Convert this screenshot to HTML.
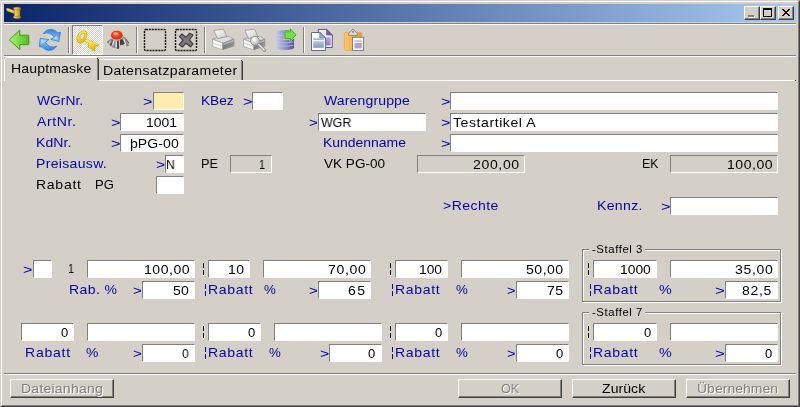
<!DOCTYPE html>
<html><head><meta charset="utf-8"><title>Maske</title>
<style>
html,body{margin:0;padding:0}
body{width:800px;height:407px;overflow:hidden;background:#d4d0c8;position:relative;font-family:"Liberation Sans",sans-serif;font-size:13px;color:#000}
.a,.t,.f,.l{position:absolute}
.t{white-space:pre;line-height:1;transform-origin:0 0;will-change:transform}
.f{box-sizing:border-box;border-top:1px solid #808080;border-left:1px solid #808080;border-right:1px solid #fff;border-bottom:1px solid #fff}
.btn{position:absolute;box-sizing:border-box;background:#d4d0c8;border-top:1px solid #fff;border-left:1px solid #fff;border-right:1px solid #404040;border-bottom:1px solid #404040}
.btn:after{content:"";position:absolute;left:0;top:0;right:0;bottom:0;border-right:1px solid #808080;border-bottom:1px solid #808080}
.dis{color:#808080;text-shadow:1px 1px 0 #fff}
.gb{position:absolute;box-sizing:border-box;border:1px solid #808080;box-shadow:1px 1px 0 #fff, inset 1px 1px 0 #fff}
.bar{position:absolute;width:1px}
</style></head><body>

<div class="a" style="left:0;top:0;width:800px;height:407px;box-sizing:border-box;border-top:1px solid #d4d0c8;border-left:1px solid #d4d0c8;border-right:1px solid #404040;border-bottom:1px solid #404040"></div>
<div class="a" style="left:1px;top:1px;width:798px;height:405px;box-sizing:border-box;border-top:1px solid #fff;border-left:1px solid #fff;border-right:1px solid #808080;border-bottom:1px solid #808080"></div>
<div class="a" style="left:4px;top:4px;width:792px;height:18px;background:linear-gradient(to right,#0a246a 0%,#a6caf0 100%)"></div>
<svg class="a" style="left:5px;top:5px" width="18" height="16" viewBox="0 0 18 16">
<defs><linearGradient id="gm" x1="0" y1="0" x2="1" y2="0"><stop offset="0" stop-color="#f7e27a"/><stop offset=".5" stop-color="#e0b838"/><stop offset="1" stop-color="#a87c10"/></linearGradient></defs>
<path d="M1.5 4.4 Q1.3 2.9 3 3.2 L9.4 5.7 L9.2 8.4 L2.3 5.9 Q1.5 5.3 1.5 4.4 Z" fill="#f4d858" stroke="#b48c18" stroke-width=".5"/>
<path d="M8.6 2.8 Q12.2 1.3 15.7 2.8 L15.7 4.2 L15 4.9 L15 10.7 L15.7 11.4 L15.7 12.9 Q12.2 14.4 8.6 12.9 L8.6 11.4 L9.3 10.7 L9.3 4.9 L8.6 4.2 Z" fill="url(#gm)" stroke="#8a6408" stroke-width=".5"/>
<path d="M9 4.4 Q12.2 5.4 15.3 4.4 M9 11.2 Q12.2 12.2 15.3 11.2" stroke="#9a7410" stroke-width=".5" fill="none"/>
</svg>
<div class="btn" style="left:744px;top:6px;width:16px;height:14px"></div>
<div class="btn" style="left:760px;top:6px;width:16px;height:14px"></div>
<div class="btn" style="left:778px;top:6px;width:16px;height:14px"></div>
<div class="a" style="left:749px;top:16px;width:6px;height:2px;background:#fff"></div>
<div class="a" style="left:748px;top:15px;width:6px;height:2px;background:#808080"></div>
<div class="a" style="left:763px;top:8px;width:9px;height:9px;box-sizing:border-box;border:1px solid #000;border-top-width:2px"></div>
<svg class="a" style="left:778px;top:6px" width="16" height="14" viewBox="0 0 16 14" shape-rendering="crispEdges"><path d="M4 3h2v1h1v1h2v-1h1v-1h2v1h-1v1h-1v1h-1v1h1v1h1v1h1v1h-2v-1h-1v-1h-2v1h-1v1h-2v-1h1v-1h1v-1h1v-1h-1v-1h-1v-1h-1z" fill="#000"/></svg>

<div class="l" style="left:4px;top:23px;width:792px;height:1px;background:#808080"></div><div class="l" style="left:4px;top:24px;width:792px;height:1px;background:#fff"></div>
<div class="l" style="left:4px;top:55px;width:792px;height:1px;background:#808080"></div><div class="l" style="left:4px;top:56px;width:792px;height:1px;background:#fff"></div>
<div class="a" style="left:72px;top:25px;width:31px;height:30px;box-sizing:border-box;border-top:1px solid #808080;border-left:1px solid #808080;border-right:1px solid #fff;border-bottom:1px solid #fff;background-color:#d4d0c8;background-image:linear-gradient(45deg,#fff 25%,transparent 25%,transparent 75%,#fff 75%),linear-gradient(45deg,#fff 25%,transparent 25%,transparent 75%,#fff 75%);background-size:2px 2px;background-position:0 0,1px 1px"></div>
<div class="l" style="left:68px;top:27px;width:1px;height:26px;background:#808080"></div><div class="l" style="left:69px;top:27px;width:1px;height:26px;background:#fff"></div>
<div class="l" style="left:136px;top:27px;width:1px;height:26px;background:#808080"></div><div class="l" style="left:137px;top:27px;width:1px;height:26px;background:#fff"></div>
<div class="l" style="left:204px;top:27px;width:1px;height:26px;background:#808080"></div><div class="l" style="left:205px;top:27px;width:1px;height:26px;background:#fff"></div>
<div class="l" style="left:303px;top:27px;width:1px;height:26px;background:#808080"></div><div class="l" style="left:304px;top:27px;width:1px;height:26px;background:#fff"></div>
<svg class="a" style="left:4px;top:25px" width="400" height="30" viewBox="4 25 400 30">
<defs>
<linearGradient id="gA" x1="0" y1="0" x2="1" y2="0"><stop offset="0" stop-color="#a4f870"/><stop offset="1" stop-color="#54bc1c"/></linearGradient>
<linearGradient id="gB" x1="0" y1="0" x2="0" y2="1"><stop offset="0" stop-color="#2f86e6"/><stop offset="1" stop-color="#8cc6ff"/></linearGradient>
<linearGradient id="gB2" x1="0" y1="1" x2="0" y2="0"><stop offset="0" stop-color="#2f86e6"/><stop offset="1" stop-color="#9ad0ff"/></linearGradient>
<radialGradient id="gR" cx=".45" cy=".4" r=".6"><stop offset="0" stop-color="#ff7a50"/><stop offset=".6" stop-color="#ee3a12"/><stop offset="1" stop-color="#d02808"/></radialGradient>
<linearGradient id="gK" x1="0" y1="0" x2="1" y2="1"><stop offset="0" stop-color="#fff27a"/><stop offset=".5" stop-color="#f8d41c"/><stop offset="1" stop-color="#d8a400"/></linearGradient>
<linearGradient id="gP" x1="0" y1="0" x2="1" y2="1"><stop offset="0" stop-color="#ffffff"/><stop offset="1" stop-color="#c8c8c8"/></linearGradient>
<linearGradient id="gPr" x1="0" y1="0" x2="0" y2="1"><stop offset="0" stop-color="#c8c8c8"/><stop offset="1" stop-color="#7c7c7c"/></linearGradient>
<linearGradient id="gC" x1="0" y1="0" x2="1" y2="0"><stop offset="0" stop-color="#c4c4e8"/><stop offset=".45" stop-color="#9494cc"/><stop offset="1" stop-color="#54549c"/></linearGradient>
<linearGradient id="gO" x1="0" y1="0" x2="1" y2="0"><stop offset="0" stop-color="#ffc868"/><stop offset="1" stop-color="#f09a20"/></linearGradient>
<linearGradient id="gBl" x1="0" y1="0" x2="0" y2="1"><stop offset="0" stop-color="#b8c8e4"/><stop offset="1" stop-color="#8098c8"/></linearGradient>
<linearGradient id="gPu" x1="0" y1="0" x2="0" y2="1"><stop offset="0" stop-color="#b8a0dc"/><stop offset="1" stop-color="#9878c4"/></linearGradient>
<radialGradient id="gG" cx=".4" cy=".35" r=".7"><stop offset="0" stop-color="#ffffff"/><stop offset="1" stop-color="#b4b4b4"/></radialGradient>
</defs>
<!-- back arrow -->
<path d="M9.3 39.9 L19.8 30 L19.8 35.2 L28.8 35.2 L28.8 44.6 L19.8 44.6 L19.8 49.7 Z" fill="url(#gA)" stroke="#3c9c14" stroke-width="1" stroke-linejoin="round"/>
<!-- refresh -->
<path d="M43.3 33.7 A8.6 8.6 0 0 1 57.5 32.7 L60.5 32.2 L58.8 41.5 L50.9 39.4 L54.3 37.3 A8.4 8.4 0 0 0 43.3 33.7 Z" fill="url(#gB)" stroke="#2472d0" stroke-width=".7" stroke-linejoin="round"/>
<path d="M56.7 46.1 A8.6 8.6 0 0 1 42.5 47.1 L39.3 46.5 L40.2 38.3 L48.8 39.6 L45.5 42.4 A8.4 8.4 0 0 0 56.7 46.1 Z" fill="url(#gB2)" stroke="#2472d0" stroke-width=".7" stroke-linejoin="round"/>
<path d="M56.6 35.4 L57.8 39.4 L53 38.6 Z" fill="#c4e4ff" opacity=".7"/>
<path d="M41.4 39.8 L41.2 44 L45.8 40.8 Z" fill="#d0eaff" opacity=".7"/>
<!-- key -->
<g>
<path d="M85.2 38.9 L98.6 44.4 L98.1 46.2 L95.3 45.9 L94.8 50.7 L92.1 50.4 L91.9 48.2 L90.6 48.6 L88.3 47.5 L88.7 43.4 L84.4 41 Z" fill="url(#gK)" stroke="#c89c00" stroke-width=".6" stroke-linejoin="round"/>
<path d="M85.8 39.7 L97.6 44.6" stroke="#fff48c" stroke-width=".7" fill="none"/>
<ellipse cx="81.9" cy="37" rx="4.3" ry="6.8" transform="rotate(30 81.9 37)" fill="url(#gK)" stroke="#dcae00" stroke-width=".7"/>
<ellipse cx="82.3" cy="36.2" rx="2" ry="3.5" transform="rotate(30 82.3 36.2)" fill="#ebe8e1" stroke="#cfa000" stroke-width=".6"/>
</g>
<!-- bug -->
<g>
<path d="M112 38 L107 42 L108.6 43.6 L110 45.6 L112.6 47.6 L114.6 48 L117.4 49 L119.2 48 L120 45.4 L122.6 45.2 L124.4 43.6 L127.2 46.6 L129.2 45 L128 42 L124 36.6 Z" fill="#9c9c9c" opacity=".85"/>
<path d="M112.4 38.2 L107 41.8 L107.6 43.2 L113.6 40.4 Z" fill="#7a7a7a"/>
<path d="M111.2 39.4 L108.8 42.4 L110 42.8 Z" fill="#e4e4e4"/>
<path d="M113.4 39.6 L109.6 44.8 L111 46 L115 41.6 Z" fill="#505050"/>
<path d="M114.8 40 L112.4 47.2 L114.4 47.8 L116.8 41 Z" fill="#8e8e8e"/>
<path d="M113.4 40 L112 44.8 L113.2 45 L114.6 40.6 Z" fill="#f2f2f2"/>
<path d="M116.8 40.4 L117.2 49 L119 48.6 L119.4 40.4 Z" fill="#424242"/>
<path d="M115.8 40.6 L115.6 46.8 L116.8 47 L117 40.8 Z" fill="#e8e8e8"/>
<path d="M118.8 40.6 L119.4 47.4 L120.8 41 Z" fill="#ececec"/>
<path d="M119.8 39.2 Q124 38.4 124.8 43.4 Q122.4 45.6 119.9 44.9 Z" fill="#404040"/>
<path d="M123.2 36.2 L126.8 41.4 L129 45.6 L127.2 46.6 L124 42.8 L122.2 38.6 Z" fill="#868686"/>
<path d="M124.4 36.8 L128.8 42 L129.4 43.6 L127.6 43.2 Z" fill="#545454"/>
<path d="M123 38.4 L125.6 45 L126.4 44.4 L124.2 38.6 Z" fill="#f0f0f0"/>
<path d="M125.6 39.2 L128.2 44.6 L128.8 44.2 Z" fill="#e0e0e0"/>
<ellipse cx="116.8" cy="35.2" rx="6.7" ry="5.2" fill="#f2b0a0" opacity=".75"/>
<ellipse cx="116.8" cy="35.2" rx="5.8" ry="4.4" fill="url(#gR)"/>
<ellipse cx="115.6" cy="33.6" rx="2.6" ry="1.3" fill="#ffb090" opacity=".7"/>
</g>
<!-- dashed boxes -->
<rect x="144.5" y="29.5" width="21" height="21" rx="1.3" fill="none" stroke="#181818" stroke-width="1.4" stroke-dasharray="2.1 0.85"/>
<rect x="175.5" y="29.5" width="21" height="21" rx="1.3" fill="none" stroke="#181818" stroke-width="1.4" stroke-dasharray="2.1 0.85"/>
<path d="M182 34 L186.2 37.4 L189.6 33.2 L193 35 L189.4 40 L193 43.8 L190.6 46.8 L186 43.2 L182.4 47 L179.2 44.6 L183 40.2 L179.4 36.6 Z" fill="#7a7a7a" stroke="#383838" stroke-width="1.1" stroke-linejoin="round"/>
<!-- printer 1 -->
<g>
<path d="M213.9 30.5 L223.5 29.1 L226.9 36.7 L217.6 38.7 Z" fill="url(#gP)" stroke="#8c8c8c" stroke-width=".7" stroke-linejoin="round"/>
<path d="M212.5 39.1 L216.6 37.9 L217.6 38.7 L226.9 36.7 L228.6 36.3 L233.8 39.1 L222.8 43.2 Z" fill="#dcdcdc" stroke="#8c8c8c" stroke-width=".6" stroke-linejoin="round"/>
<path d="M212.5 39.1 L222.8 43.2 L222.8 49.7 L212.5 46.6 Z" fill="#f8f8f8" stroke="#909090" stroke-width=".6" stroke-linejoin="round"/>
<path d="M222.8 43.2 L233.8 39.1 L233.8 46 L222.8 49.7 Z" fill="url(#gPr)" stroke="#808080" stroke-width=".6" stroke-linejoin="round"/>
<path d="M212.8 43 L222.8 46.4" stroke="#c4c4c4" stroke-width=".8" fill="none"/>
<path d="M223.2 46 L233.6 42.2 M223.2 47.6 L233.6 43.8" stroke="#686868" stroke-width=".7" fill="none"/>
<ellipse cx="230.8" cy="40.6" rx="1.3" ry=".7" fill="#909090"/>
</g>
<!-- printer 2 + magnifier -->
<g transform="translate(31 0)">
<path d="M213.9 30.5 L223.5 29.1 L226.9 36.7 L217.6 38.7 Z" fill="url(#gP)" stroke="#8c8c8c" stroke-width=".7" stroke-linejoin="round"/>
<path d="M212.5 39.1 L216.6 37.9 L217.6 38.7 L226.9 36.7 L228.6 36.3 L233.8 39.1 L222.8 43.2 Z" fill="#dcdcdc" stroke="#8c8c8c" stroke-width=".6" stroke-linejoin="round"/>
<path d="M212.5 39.1 L222.8 43.2 L222.8 49.7 L212.5 46.6 Z" fill="#f8f8f8" stroke="#909090" stroke-width=".6" stroke-linejoin="round"/>
<path d="M222.8 43.2 L233.8 39.1 L233.8 46 L222.8 49.7 Z" fill="url(#gPr)" stroke="#808080" stroke-width=".6" stroke-linejoin="round"/>
<path d="M212.8 43 L222.8 46.4" stroke="#c4c4c4" stroke-width=".8" fill="none"/>
<path d="M223.2 46 L233.6 42.2 M223.2 47.6 L233.6 43.8" stroke="#686868" stroke-width=".7" fill="none"/>
<ellipse cx="230.8" cy="40.6" rx="1.3" ry=".7" fill="#909090"/>
</g>
<path d="M258.4 44.2 L264.4 50.2" stroke="#8c8c8c" stroke-width="3" stroke-linecap="round"/>
<path d="M258.4 44.2 L264.2 50" stroke="#e8e8e8" stroke-width="1.4" stroke-linecap="round"/>
<circle cx="254.9" cy="40.8" r="4.4" fill="url(#gG)" stroke="#909090" stroke-width="1"/>
<!-- database -->
<path d="M276.5 32 Q276.5 30 285.3 30 Q294.1 30 294.1 32 L294.1 47.6 Q294.1 49.9 285.3 49.9 Q276.5 49.9 276.5 47.6 Z" fill="url(#gC)"/>
<path d="M277 35.2 Q285 37 293.6 35.2 M277 38.6 Q285 40.4 293.6 38.6 M277 42 Q285 43.8 293.6 42 M277 45.4 Q285 47.2 293.6 45.4" stroke="#d0d0f0" stroke-width=".8" fill="none" opacity=".75"/>
<path d="M284.8 31.8 L290.3 31.8 L290.3 28.8 L296.2 34.9 L290.3 40.8 L290.3 38.4 L284.8 38.4 Z" fill="#7ce44c" stroke="#c8f4b8" stroke-width="1.6" stroke-linejoin="round"/>
<path d="M284.8 31.8 L290.3 31.8 L290.3 28.8 L296.2 34.9 L290.3 40.8 L290.3 38.4 L284.8 38.4 Z" fill="#74e044" stroke="#2c9420" stroke-width=".8" stroke-linejoin="round"/>
<!-- copy -->
<path d="M318.3 29.4 L326.6 29.4 L332.3 35 L332.3 47.5 L318.3 47.5 Z" fill="#f0ecfa" stroke="#54408c" stroke-width=".9" stroke-linejoin="round"/>
<path d="M326.6 29.4 L326.6 35 L332.3 35 Z" fill="#7c5cb4" stroke="#54408c" stroke-width=".6"/>
<rect x="324" y="37.4" width="6.6" height="8" fill="url(#gPu)"/>
<path d="M311.5 32.5 L319.8 32.5 L325.4 37.8 L325.4 50.5 L311.5 50.5 Z" fill="#fcfcff" stroke="#50607c" stroke-width=".9" stroke-linejoin="round"/>
<path d="M319.8 32.5 L319.8 37.8 L325.4 37.8 Z" fill="#8cb4d8" stroke="#50607c" stroke-width=".6"/>
<rect x="313.2" y="38.2" width="10.6" height="1.9" fill="#a8b8d4"/>
<rect x="313.2" y="41.2" width="10.6" height="6.6" fill="url(#gBl)"/>
<!-- paste -->
<rect x="344.4" y="32.3" width="17.2" height="18" rx="1.6" fill="url(#gO)" stroke="#f0a030" stroke-width=".7"/>
<path d="M348.7 35.4 L348.7 33.4 L352.9 29.1 L357.3 33.4 L357.3 35.4 Z" fill="#dcdcd4" stroke="#787878" stroke-width=".8" stroke-linejoin="round"/>
<rect x="352" y="31.3" width="1.8" height="1.2" fill="#686868"/>
<rect x="352.6" y="37.2" width="11" height="13.2" fill="#fcfcfc" stroke="#747474" stroke-width=".9"/>
<rect x="354.5" y="40.4" width="7.4" height="1.2" fill="#a4a4c8"/>
<rect x="354.5" y="42.9" width="7.4" height="5.5" fill="#a8a8d8"/>
</svg>

<div class="l" style="left:6px;top:57px;width:91px;height:1px;background:#fff"></div>
<div class="l" style="left:5px;top:58px;width:1px;height:1px;background:#fff"></div>
<div class="l" style="left:4px;top:59px;width:1px;height:22px;background:#fff"></div>
<div class="l" style="left:97px;top:59px;width:1px;height:21px;background:#808080"></div>
<div class="l" style="left:98px;top:59px;width:1px;height:21px;background:#404040"></div>
<div class="l" style="left:97px;top:58px;width:1px;height:1px;background:#404040"></div>
<div class="l" style="left:99px;top:59px;width:142px;height:1px;background:#fff"></div>
<div class="l" style="left:241px;top:61px;width:1px;height:19px;background:#808080"></div>
<div class="l" style="left:242px;top:61px;width:1px;height:19px;background:#404040"></div>
<div class="l" style="left:241px;top:60px;width:1px;height:1px;background:#404040"></div>
<div class="l" style="left:99px;top:80px;width:696px;height:1px;background:#fff"></div>
<div class="l" style="left:795px;top:80px;width:1px;height:1px;background:#404040"></div>

<div class="f" style="left:153px;top:92px;width:31px;height:18px;background:#fdeeb0"></div>
<div class="f" style="left:252px;top:92px;width:31px;height:18px;background:#fff"></div>
<div class="f" style="left:450px;top:92px;width:328px;height:18px;background:#fff"></div>
<div class="f" style="left:120px;top:113px;width:64px;height:18px;background:#fff"></div>
<div class="f" style="left:318px;top:113px;width:108px;height:18px;background:#fff"></div>
<div class="f" style="left:450px;top:113px;width:328px;height:18px;background:#fff"></div>
<div class="f" style="left:120px;top:134px;width:64px;height:18px;background:#fff"></div>
<div class="f" style="left:450px;top:134px;width:328px;height:18px;background:#fff"></div>
<div class="f" style="left:165px;top:155px;width:19px;height:18px;background:#fff"></div>
<div class="f" style="left:230px;top:155px;width:42px;height:18px;background:#d4d0c8"></div>
<div class="f" style="left:417px;top:155px;width:108px;height:18px;background:#d4d0c8"></div>
<div class="f" style="left:670px;top:155px;width:108px;height:18px;background:#d4d0c8"></div>
<div class="f" style="left:156px;top:176px;width:28px;height:18px;background:#fff"></div>
<div class="f" style="left:670px;top:197px;width:108px;height:18px;background:#fff"></div>
<div class="f" style="left:33px;top:260px;width:19px;height:18px;background:#fff"></div>
<div class="f" style="left:87px;top:260px;width:108px;height:18px;background:#fff"></div>
<div class="f" style="left:142px;top:281px;width:53px;height:18px;background:#fff"></div>
<div class="f" style="left:21px;top:323px;width:53px;height:18px;background:#fff"></div>
<div class="f" style="left:87px;top:323px;width:108px;height:18px;background:#fff"></div>
<div class="f" style="left:142px;top:344px;width:53px;height:18px;background:#fff"></div>
<div class="f" style="left:208px;top:260px;width:42px;height:18px;background:#fff"></div>
<div class="f" style="left:263px;top:260px;width:108px;height:18px;background:#fff"></div>
<div class="f" style="left:318px;top:281px;width:53px;height:18px;background:#fff"></div>
<div class="f" style="left:208px;top:323px;width:53px;height:18px;background:#fff"></div>
<div class="f" style="left:274px;top:323px;width:108px;height:18px;background:#fff"></div>
<div class="f" style="left:329px;top:344px;width:53px;height:18px;background:#fff"></div>
<div class="f" style="left:395px;top:260px;width:53px;height:18px;background:#fff"></div>
<div class="f" style="left:461px;top:260px;width:108px;height:18px;background:#fff"></div>
<div class="f" style="left:516px;top:281px;width:53px;height:18px;background:#fff"></div>
<div class="f" style="left:395px;top:323px;width:53px;height:18px;background:#fff"></div>
<div class="f" style="left:461px;top:323px;width:108px;height:18px;background:#fff"></div>
<div class="f" style="left:516px;top:344px;width:53px;height:18px;background:#fff"></div>
<div class="f" style="left:593px;top:260px;width:64px;height:18px;background:#fff"></div>
<div class="f" style="left:670px;top:260px;width:108px;height:18px;background:#fff"></div>
<div class="f" style="left:725px;top:281px;width:53px;height:18px;background:#fff"></div>
<div class="f" style="left:593px;top:323px;width:64px;height:18px;background:#fff"></div>
<div class="f" style="left:670px;top:323px;width:108px;height:18px;background:#fff"></div>
<div class="f" style="left:725px;top:344px;width:53px;height:18px;background:#fff"></div>
<!-- bottom separator -->
<div class="l" style="left:4px;top:373px;width:792px;height:1px;background:#808080"></div><div class="l" style="left:4px;top:374px;width:792px;height:1px;background:#fff"></div>
<!-- buttons -->
<div class="btn" style="left:10px;top:379px;width:104px;height:19px"></div>
<div class="btn" style="left:458px;top:379px;width:104px;height:19px"></div>
<div class="btn" style="left:572px;top:379px;width:104px;height:19px"></div>
<div class="btn" style="left:686px;top:379px;width:104px;height:19px"></div>
<!-- group boxes -->
<div class="gb" style="left:582px;top:249px;width:199px;height:53px"></div>
<div class="gb" style="left:582px;top:312px;width:199px;height:53px"></div>
<div class="a" style="left:589px;top:245px;width:56px;height:8px;background:#d4d0c8"></div>
<div class="a" style="left:589px;top:308px;width:56px;height:8px;background:#d4d0c8"></div>
<!-- bars -->
<div class="bar" style="left:203px;top:263px;height:5px;background:#000"></div>
<div class="bar" style="left:203px;top:270px;height:5px;background:#000"></div>
<div class="bar" style="left:203px;top:326px;height:5px;background:#000"></div>
<div class="bar" style="left:203px;top:333px;height:5px;background:#000"></div>
<div class="bar" style="left:390px;top:263px;height:5px;background:#000"></div>
<div class="bar" style="left:390px;top:270px;height:5px;background:#000"></div>
<div class="bar" style="left:390px;top:326px;height:5px;background:#000"></div>
<div class="bar" style="left:390px;top:333px;height:5px;background:#000"></div>
<div class="bar" style="left:588px;top:263px;height:5px;background:#000"></div>
<div class="bar" style="left:588px;top:270px;height:5px;background:#000"></div>
<div class="bar" style="left:588px;top:326px;height:5px;background:#000"></div>
<div class="bar" style="left:588px;top:333px;height:5px;background:#000"></div>
<div class="bar" style="left:205px;top:284px;height:5px;background:#0404a8"></div>
<div class="bar" style="left:205px;top:291px;height:5px;background:#0404a8"></div>
<div class="bar" style="left:205px;top:347px;height:5px;background:#0404a8"></div>
<div class="bar" style="left:205px;top:354px;height:5px;background:#0404a8"></div>
<div class="bar" style="left:392px;top:284px;height:5px;background:#0404a8"></div>
<div class="bar" style="left:392px;top:291px;height:5px;background:#0404a8"></div>
<div class="bar" style="left:392px;top:347px;height:5px;background:#0404a8"></div>
<div class="bar" style="left:392px;top:354px;height:5px;background:#0404a8"></div>
<div class="bar" style="left:590px;top:284px;height:5px;background:#0404a8"></div>
<div class="bar" style="left:590px;top:291px;height:5px;background:#0404a8"></div>
<div class="bar" style="left:590px;top:347px;height:5px;background:#0404a8"></div>
<div class="bar" style="left:590px;top:354px;height:5px;background:#0404a8"></div>

<span class="t" style="left:37.00px;top:94.00px;font-size:13px;color:#0404a8;transform:scaleX(1.0655)">WGrNr.</span>
<span class="t" style="left:143.25px;top:94.50px;font-size:13px;color:#0404a8;transform:scaleX(1.2500)">&gt;</span>
<span class="t" style="left:200.95px;top:94.00px;font-size:13px;color:#0404a8;transform:scaleX(1.0517)">KBez</span>
<span class="t" style="left:242.50px;top:94.50px;font-size:13px;color:#0404a8;transform:scaleX(1.2500)">&gt;</span>
<span class="t" style="left:324.00px;top:94.00px;font-size:13px;color:#0404a8;letter-spacing:0.117px;transform:scaleX(1.0800)">Warengruppe</span>
<span class="t" style="left:440.50px;top:94.50px;font-size:13px;color:#0404a8;transform:scaleX(1.2500)">&gt;</span>
<span class="t" style="left:37.00px;top:115.00px;font-size:13px;color:#0404a8;letter-spacing:0.544px;transform:scaleX(1.0800)">ArtNr.</span>
<span class="t" style="left:110.50px;top:115.50px;font-size:13px;color:#0404a8;transform:scaleX(1.2500)">&gt;</span>
<span class="t" style="left:146.43px;top:116.00px;font-size:13px;color:#000;transform:scaleX(1.0714)">1001</span>
<span class="t" style="left:309.33px;top:115.50px;font-size:13px;color:#0404a8;transform:scaleX(1.1667)">&gt;</span>
<span class="t" style="left:320.50px;top:116.00px;font-size:13px;color:#000;transform:scaleX(0.9516)">WGR</span>
<span class="t" style="left:440.50px;top:115.50px;font-size:13px;color:#0404a8;transform:scaleX(1.2500)">&gt;</span>
<span class="t" style="left:453.00px;top:116.00px;font-size:13px;color:#000;letter-spacing:0.532px;transform:scaleX(1.0800)">Testartikel A</span>
<span class="t" style="left:35.92px;top:136.00px;font-size:13px;color:#0404a8;letter-spacing:0.062px;transform:scaleX(1.0800)">KdNr.</span>
<span class="t" style="left:110.50px;top:136.50px;font-size:13px;color:#0404a8;transform:scaleX(1.2500)">&gt;</span>
<span class="t" style="left:129.67px;top:137.00px;font-size:13px;color:#000;letter-spacing:0.057px;transform:scaleX(1.0800)">þPG-00</span>
<span class="t" style="left:322.93px;top:136.00px;font-size:13px;color:#0404a8;transform:scaleX(1.0724)">Kundenname</span>
<span class="t" style="left:440.50px;top:136.50px;font-size:13px;color:#0404a8;transform:scaleX(1.2500)">&gt;</span>
<span class="t" style="left:35.92px;top:157.00px;font-size:13px;color:#0404a8;letter-spacing:0.295px;transform:scaleX(1.0800)">Preisausw.</span>
<span class="t" style="left:155.79px;top:157.50px;font-size:13px;color:#0404a8;transform:scaleX(1.2083)">&gt;</span>
<span class="t" style="left:166.06px;top:158.00px;font-size:13px;color:#000;transform:scaleX(0.9375)">N</span>
<span class="t" style="left:201.03px;top:157.00px;font-size:13px;color:#000;transform:scaleX(0.9688)">PE</span>
<span class="t" style="left:259.17px;top:158.00px;font-size:13px;color:#000;transform:scaleX(0.8333)">1</span>
<span class="t" style="left:324.00px;top:157.00px;font-size:13px;color:#000;transform:scaleX(1.0431)">VK PG-00</span>
<span class="t" style="left:473.42px;top:158.00px;font-size:13px;color:#000;letter-spacing:0.594px;transform:scaleX(1.0800)">200,00</span>
<span class="t" style="left:641.56px;top:157.00px;font-size:13px;color:#000;transform:scaleX(0.9375)">EK</span>
<span class="t" style="left:727.17px;top:158.00px;font-size:13px;color:#000;letter-spacing:0.502px;transform:scaleX(1.0800)">100,00</span>
<span class="t" style="left:35.92px;top:178.00px;font-size:13px;color:#000;letter-spacing:0.656px;transform:scaleX(1.0800)">Rabatt</span>
<span class="t" style="left:95.26px;top:178.00px;font-size:13px;color:#000;transform:scaleX(0.9853)">PG</span>
<span class="t" style="left:443.42px;top:199.00px;font-size:13px;color:#0404a8;letter-spacing:0.423px;transform:scaleX(1.0800)">&gt;Rechte</span>
<span class="t" style="left:596.92px;top:199.00px;font-size:13px;color:#0404a8;letter-spacing:0.317px;transform:scaleX(1.0800)">Kennz.</span>
<span class="t" style="left:660.50px;top:199.50px;font-size:13px;color:#0404a8;transform:scaleX(1.2500)">&gt;</span>
<span class="t" style="left:23.25px;top:262.50px;font-size:13px;color:#0404a8;transform:scaleX(1.2500)">&gt;</span>
<span class="t" style="left:67.92px;top:262.00px;font-size:13px;color:#000;transform:scaleX(0.8333)">1</span>
<span class="t" style="left:143.92px;top:263.00px;font-size:13px;color:#000;letter-spacing:0.502px;transform:scaleX(1.0800)">100,00</span>
<span class="t" style="left:68.92px;top:283.00px;font-size:13px;color:#0404a8;letter-spacing:0.365px;transform:scaleX(1.0800)">Rab. %</span>
<span class="t" style="left:133.08px;top:283.50px;font-size:13px;color:#0404a8;transform:scaleX(1.1667)">&gt;</span>
<span class="t" style="left:172.67px;top:284.00px;font-size:13px;color:#000;letter-spacing:0.194px;transform:scaleX(1.0800)">50</span>
<span class="t" style="left:60.75px;top:326.00px;font-size:13px;color:#000;transform:scaleX(0.9643)">0</span>
<span class="t" style="left:25.17px;top:346.00px;font-size:13px;color:#0404a8;letter-spacing:0.702px;transform:scaleX(1.0800)">Rabatt</span>
<span class="t" style="left:85.75px;top:346.00px;font-size:13px;color:#0404a8;transform:scaleX(1.0682)">%</span>
<span class="t" style="left:133.08px;top:346.50px;font-size:13px;color:#0404a8;transform:scaleX(1.1667)">&gt;</span>
<span class="t" style="left:181.75px;top:347.00px;font-size:13px;color:#000;transform:scaleX(0.9286)">0</span>
<span class="t" style="left:228.17px;top:263.00px;font-size:13px;color:#000;letter-spacing:0.426px;transform:scaleX(1.0800)">10</span>
<span class="t" style="left:327.67px;top:263.00px;font-size:13px;color:#000;letter-spacing:0.641px;transform:scaleX(1.0800)">70,00</span>
<span class="t" style="left:208.17px;top:283.00px;font-size:13px;color:#0404a8;letter-spacing:0.609px;transform:scaleX(1.0800)">Rabatt</span>
<span class="t" style="left:264.25px;top:283.00px;font-size:13px;color:#0404a8;transform:scaleX(1.0227)">%</span>
<span class="t" style="left:308.83px;top:283.50px;font-size:13px;color:#0404a8;transform:scaleX(1.1667)">&gt;</span>
<span class="t" style="left:348.42px;top:284.00px;font-size:13px;color:#000;letter-spacing:1.352px;transform:scaleX(1.0800)">65</span>
<span class="t" style="left:247.50px;top:326.00px;font-size:13px;color:#000;transform:scaleX(1.0000)">0</span>
<span class="t" style="left:208.17px;top:346.00px;font-size:13px;color:#0404a8;letter-spacing:0.609px;transform:scaleX(1.0800)">Rabatt</span>
<span class="t" style="left:269.25px;top:346.00px;font-size:13px;color:#0404a8;transform:scaleX(1.0227)">%</span>
<span class="t" style="left:319.54px;top:346.50px;font-size:13px;color:#0404a8;transform:scaleX(1.2083)">&gt;</span>
<span class="t" style="left:368.00px;top:347.00px;font-size:13px;color:#000;transform:scaleX(1.0000)">0</span>
<span class="t" style="left:418.94px;top:263.00px;font-size:13px;color:#000;transform:scaleX(1.0625)">100</span>
<span class="t" style="left:525.92px;top:263.00px;font-size:13px;color:#000;letter-spacing:0.468px;transform:scaleX(1.0800)">50,00</span>
<span class="t" style="left:395.17px;top:283.00px;font-size:13px;color:#0404a8;letter-spacing:0.609px;transform:scaleX(1.0800)">Rabatt</span>
<span class="t" style="left:456.25px;top:283.00px;font-size:13px;color:#0404a8;transform:scaleX(1.0227)">%</span>
<span class="t" style="left:507.12px;top:283.50px;font-size:13px;color:#0404a8;transform:scaleX(1.1250)">&gt;</span>
<span class="t" style="left:546.92px;top:284.00px;font-size:13px;color:#000;letter-spacing:0.426px;transform:scaleX(1.0800)">75</span>
<span class="t" style="left:434.50px;top:326.00px;font-size:13px;color:#000;transform:scaleX(0.9643)">0</span>
<span class="t" style="left:395.17px;top:346.00px;font-size:13px;color:#0404a8;letter-spacing:0.609px;transform:scaleX(1.0800)">Rabatt</span>
<span class="t" style="left:456.25px;top:346.00px;font-size:13px;color:#0404a8;transform:scaleX(1.0227)">%</span>
<span class="t" style="left:507.12px;top:346.50px;font-size:13px;color:#0404a8;transform:scaleX(1.1250)">&gt;</span>
<span class="t" style="left:555.75px;top:347.00px;font-size:13px;color:#000;transform:scaleX(0.9643)">0</span>
<span class="t" style="left:619.54px;top:263.00px;font-size:13px;color:#000;transform:scaleX(1.0643)">1000</span>
<span class="t" style="left:734.67px;top:263.00px;font-size:13px;color:#000;letter-spacing:0.641px;transform:scaleX(1.0800)">35,00</span>
<span class="t" style="left:593.32px;top:283.00px;font-size:13px;color:#0404a8;letter-spacing:0.600px;transform:scaleX(1.0800)">Rabatt</span>
<span class="t" style="left:658.50px;top:283.00px;font-size:13px;color:#0404a8;transform:scaleX(1.1000)">%</span>
<span class="t" style="left:715.30px;top:283.50px;font-size:13px;color:#0404a8;transform:scaleX(1.3000)">&gt;</span>
<span class="t" style="left:742.32px;top:284.00px;font-size:13px;color:#000;letter-spacing:0.611px;transform:scaleX(1.0800)">82,5</span>
<span class="t" style="left:643.50px;top:326.00px;font-size:13px;color:#000;transform:scaleX(0.9857)">0</span>
<span class="t" style="left:593.32px;top:346.00px;font-size:13px;color:#0404a8;letter-spacing:0.600px;transform:scaleX(1.0800)">Rabatt</span>
<span class="t" style="left:658.50px;top:346.00px;font-size:13px;color:#0404a8;transform:scaleX(1.1000)">%</span>
<span class="t" style="left:715.30px;top:346.50px;font-size:13px;color:#0404a8;transform:scaleX(1.3000)">&gt;</span>
<span class="t" style="left:764.50px;top:347.00px;font-size:13px;color:#000;transform:scaleX(0.9714)">0</span>
<span class="t" style="left:11.12px;top:62.00px;font-size:13px;color:#000;letter-spacing:0.148px;transform:scaleX(1.0800)">Hauptmaske</span>
<span class="t" style="left:103.22px;top:64.00px;font-size:13px;color:#000;letter-spacing:0.373px;transform:scaleX(1.0800)">Datensatzparameter</span>
<span class="t dis" style="left:20.62px;top:381.70px;font-size:13px;color:#808080;letter-spacing:0.198px;transform:scaleX(1.0800)">Dateianhang</span>
<span class="t dis" style="left:500.78px;top:381.70px;font-size:13px;color:#808080;transform:scaleX(0.9706)">OK</span>
<span class="t" style="left:601.75px;top:381.70px;font-size:13px;color:#000;letter-spacing:0.056px;transform:scaleX(1.0800)">Zurück</span>
<span class="t dis" style="left:696.62px;top:381.70px;font-size:13px;color:#808080;transform:scaleX(1.0784)">Übernehmen</span>
<span class="t" style="left:591.90px;top:244.11px;font-size:10.5px;color:#000;letter-spacing:0.539px;transform:scaleX(1.0800)">-Staffel 3</span>
<span class="t" style="left:591.90px;top:307.11px;font-size:10.5px;color:#000;letter-spacing:0.539px;transform:scaleX(1.0800)">-Staffel 7</span>
</body></html>
